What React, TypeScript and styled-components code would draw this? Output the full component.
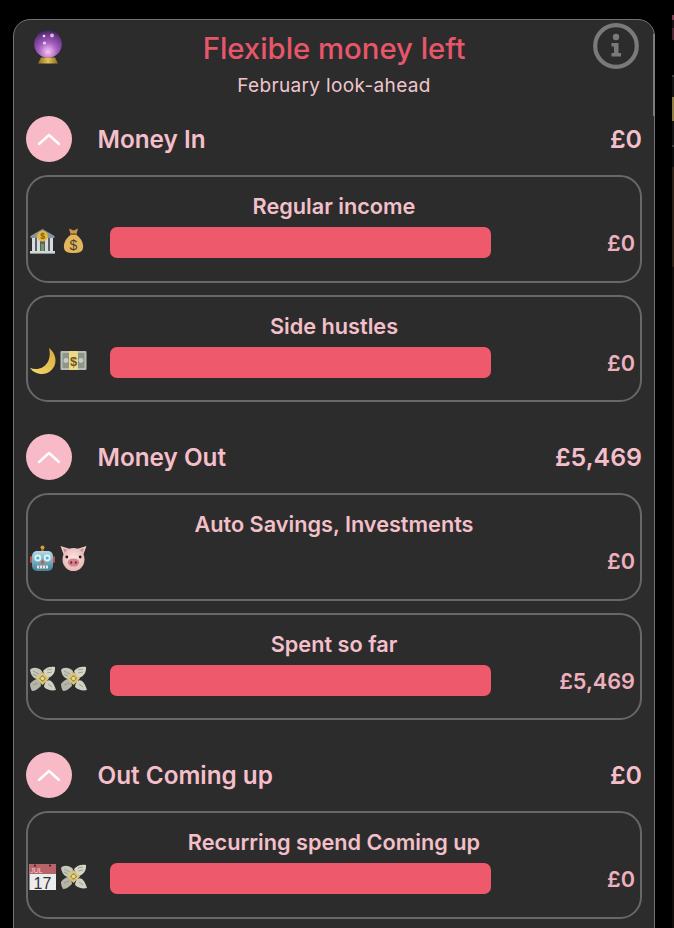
import React from "react";
import styled, { createGlobalStyle } from "styled-components";

const Global = createGlobalStyle`
  html, body { margin: 0; padding: 0; height: 100%; background: #000; overflow: hidden; }
  body { font-family: Inter, "Noto Sans", "Liberation Sans", sans-serif; }
`;

const Page = styled.div`
  display: flex;
  align-items: flex-start;
  height: 928px;
  padding: 19px 0 0 13px;
  box-sizing: border-box;
  overflow: hidden;
`;

const Panel = styled.main`
  position: relative;
  flex: none;
  width: 642px;
  height: 960px;
  box-sizing: border-box;
  padding: 0 12px;
  background: #2c2c2d;
  border: 1px solid #727274;
  border-radius: 17px;
`;

const ScrollThumb = styled.div`
  position: absolute;
  top: 14px;
  right: -1px;
  width: 2px;
  height: 82px;
  background: #7c7c7e;
`;

const Header = styled.header`
  display: grid;
  grid-template-columns: 1fr auto 1fr;
  align-items: start;
  height: 96px;
`;

const HeaderLeft = styled.div`
  padding: 10px 0 0 7px;
`;

const HeaderRight = styled.div`
  display: flex;
  justify-content: flex-end;
  padding: 3px 3px 0 0;
`;

const TitleBlock = styled.div`
  display: flex;
  flex-direction: column;
  align-items: center;
`;

const Title = styled.h1`
  margin: 10px 0 0;
  font-size: 29.3px;
  line-height: 38px;
  font-weight: 550;
  color: #e8566a;
  white-space: nowrap;
`;

const Subtitle = styled.p`
  margin: 6px 0 0;
  font-size: 19px;
  line-height: 24px;
  letter-spacing: 0.35px;
  font-weight: 400;
  color: #f0c6cd;
  white-space: nowrap;
`;

const Section = styled.section`
  margin-bottom: 32px;
`;

const SectionHead = styled.div`
  display: flex;
  align-items: center;
  height: 46px;
  margin-bottom: 13px;
`;

const Toggle = styled.button`
  flex: none;
  display: flex;
  align-items: center;
  justify-content: center;
  width: 46px;
  height: 46px;
  padding: 0;
  border: none;
  border-radius: 50%;
  background: #f8bac6;
`;

const SectionName = styled.h2`
  flex: 1;
  margin: 0 0 0 25.5px;
  font-size: 24.3px;
  font-weight: 600;
  color: #f5bfca;
`;

const SectionTotal = styled.span`
  font-size: 24.9px;
  font-weight: 600;
  color: #f5bfca;
`;

const Card = styled.div`
  box-sizing: border-box;
  height: 107.5px;
  margin-bottom: 12px;
  padding-top: 15px;
  border: 2px solid #68686a;
  border-radius: 22px;
  &:last-child { margin-bottom: 0; }
`;

const CardTitle = styled.h3`
  margin: 0 0 7px;
  font-size: 21.7px;
  line-height: 28px;
  font-weight: 600;
  text-align: center;
  color: #f3c0ca;
`;

const CardRow = styled.div`
  display: flex;
  align-items: center;
  height: 31px;
  padding: 0 5px 0 0.5px;
`;

const Emojis = styled.div`
  flex: none;
  display: flex;
  gap: 4px;
  width: 58px;
  margin: -4px 23px 0 0;
`;

const Bar = styled.div`
  flex: none;
  width: 381px;
  height: 31px;
  border-radius: 7px;
  background: #ee5a6b;
`;

const Amount = styled.span`
  margin-left: auto;
  padding-top: 1px;
  font-size: 21.7px;
  font-weight: 600;
  color: #edb0bc;
`;

const Strip = styled.aside`
  flex: none;
  display: flex;
  flex-direction: column;
  width: 2px;
  margin-left: 17px;
  margin-top: -19px;
`;

const StripPiece = styled.div<{ $h: number; $c: string }>`
  height: ${(p) => p.$h}px;
  background: ${(p) => p.$c};
`;

const Svg: React.FC<React.PropsWithChildren<{ size?: number }>> = ({ size = 27, children }) => (
  <svg width={size} height={size} viewBox="0 0 27 27" style={{ display: "block", flex: "none" }}>
    {children}
  </svg>
);

const Chevron = () => (
  <svg width="24" height="14" viewBox="0 0 24 14">
    <path d="M2 12 L12 3 L22 12" fill="none" stroke="#fff" strokeWidth="2.4" strokeLinecap="round" strokeLinejoin="round" />
  </svg>
);

const Info = () => (
  <svg width="46" height="46" viewBox="0 0 46 46">
    <circle cx="23" cy="23" r="20.8" fill="none" stroke="#7a7a7c" strokeWidth="4.2" />
    <circle cx="23" cy="14" r="3.2" fill="#7a7a7c" />
    <path d="M18.5 20 H25.5 V30 H28 V33.5 H18.5 V30 H21 V23.4 H18.5 Z" fill="#7a7a7c" />
  </svg>
);

const Crystal = () => (
  <svg width="30" height="35" viewBox="0 0 30 35">
    <defs>
      <radialGradient id="orb" cx="50%" cy="78%" r="75%">
        <stop offset="0" stopColor="#f7c6f5" />
        <stop offset="0.45" stopColor="#a45fc0" />
        <stop offset="0.85" stopColor="#6a3686" />
        <stop offset="1" stopColor="#46265c" />
      </radialGradient>
      <linearGradient id="gold" x1="0" x2="1">
        <stop offset="0" stopColor="#8a6a1e" />
        <stop offset="0.5" stopColor="#e3c25a" />
        <stop offset="1" stopColor="#8a6a1e" />
      </linearGradient>
    </defs>
    <circle cx="15" cy="14" r="13.8" fill="url(#orb)" />
    <circle cx="11" cy="6" r="1.3" fill="#f1ddf5" />
    <circle cx="19" cy="5.5" r="1.9" fill="#d9b6e6" />
    <circle cx="11.5" cy="13" r="1.6" fill="#e6cdef" />
    <path d="M8 27.5 H22 L25 33.5 H5 Z" fill="url(#gold)" />
  </svg>
);

const Bank = () => (
  <Svg>
    <path d="M1.5 9 L13.5 2 L25.5 9 V11 H1.5 Z" fill="#8d949a" />
    <rect x="1" y="24" width="25" height="2.6" fill="#d3d6d9" />
    <rect x="3" y="11" width="21" height="13" fill="#59626b" />
    <g fill="#d8dbde">
      <rect x="3" y="11" width="3" height="13" />
      <rect x="8" y="11" width="3" height="13" />
      <rect x="16" y="11" width="3" height="13" />
      <rect x="21" y="11" width="3" height="13" />
    </g>
    <rect x="12" y="17" width="3" height="7" fill="#6d9c63" />
    <circle cx="13.5" cy="9.2" r="5.4" fill="#e5b93b" />
    <text x="13.5" y="12.2" fontSize="8.5" fontWeight="700" textAnchor="middle" fontFamily="Liberation Sans, sans-serif" fill="#7c5a10">$</text>
  </Svg>
);

const Bag = () => (
  <Svg>
    <path d="M9 1.5 L13.5 3.5 L18 1.5 L16.5 7 H10.5 Z" fill="#c49a48" />
    <rect x="10" y="6.2" width="7" height="2" rx="1" fill="#8a6424" />
    <path d="M10.5 8 C5 12 3.5 17 4 21 C4.5 25 8 26 13.5 26 C19 26 22.5 25 23 21 C23.5 17 22 12 16.5 8 Z" fill="#e3b65c" />
    <text x="13.5" y="22.5" fontSize="14" fontWeight="400" textAnchor="middle" fontFamily="Liberation Sans, sans-serif" fill="#4a4132">$</text>
  </Svg>
);

const Moon = () => (
  <Svg>
    <defs>
      <linearGradient id="moon" x1="0" y1="1" x2="1" y2="0">
        <stop offset="0" stopColor="#f6dc6f" />
        <stop offset="1" stopColor="#d9a93a" />
      </linearGradient>
    </defs>
    <path d="M20 1 C24 4 26.5 8.5 26.5 13.5 C26.5 21 20.5 27 13 27 C8 27 3.5 24.5 1 21 C5 22.5 10 22.5 14 20 C20 16.5 22 8.5 20 1 Z" fill="url(#moon)" />
  </Svg>
);

const Note = () => (
  <Svg>
    <rect x="0.5" y="4" width="26" height="19" rx="1" fill="#b9bdb0" />
    <rect x="2.5" y="6" width="22" height="15" fill="#8e958a" />
    <circle cx="6" cy="13.5" r="2.4" fill="#c9ccc2" />
    <circle cx="21" cy="13.5" r="2.4" fill="#c9ccc2" />
    <rect x="9" y="4" width="9" height="19" fill="#ecd98a" />
    <text x="13.5" y="18.5" fontSize="13" fontWeight="700" textAnchor="middle" fontFamily="Liberation Sans, sans-serif" fill="#6e5a1c">$</text>
  </Svg>
);

const Robot = () => (
  <Svg>
    <circle cx="13.5" cy="2.5" r="2" fill="#e19b3c" />
    <rect x="12.5" y="3.5" width="2" height="3" fill="#b77c30" />
    <rect x="1" y="11" width="3" height="7" rx="1.5" fill="#b5544e" />
    <rect x="23" y="11" width="3" height="7" rx="1.5" fill="#b5544e" />
    <defs>
      <linearGradient id="rb" x1="0" y1="0" x2="0" y2="1">
        <stop offset="0" stopColor="#b4dbe6" />
        <stop offset="1" stopColor="#3f8096" />
      </linearGradient>
    </defs>
    <rect x="3" y="6" width="21" height="20" rx="5" fill="url(#rb)" />
    <circle cx="8.8" cy="13" r="3.4" fill="#dff2f7" />
    <circle cx="8.8" cy="13" r="1.6" fill="#4fb4d4" />
    <circle cx="18.2" cy="13" r="3.4" fill="#dff2f7" />
    <circle cx="18.2" cy="13" r="1.6" fill="#4fb4d4" />
    <path d="M13.5 14 L15.5 18.5 H11.5 Z" fill="#c3554f" />
    <rect x="8" y="20.5" width="11" height="3" rx="0.5" fill="#e7e7df" />
    <path d="M10.5 20.5 V23.5 M13.5 20.5 V23.5 M16.5 20.5 V23.5" stroke="#666" strokeWidth="0.7" />
  </Svg>
);

const Pig = () => (
  <Svg>
    <defs>
      <radialGradient id="pg" cx="50%" cy="45%" r="60%">
        <stop offset="0" stopColor="#fbe8e4" />
        <stop offset="1" stopColor="#e6b2b1" />
      </radialGradient>
    </defs>
    <path d="M0.5 1 L10 4 L5 13 Z M26.5 1 L17 4 L22 13 Z" fill="#f0cac3" />
    <path d="M3 3 L7.5 5 L5 9 Z M24 3 L19.5 5 L22 9 Z" fill="#d38e94" />
    <ellipse cx="13.5" cy="14.5" rx="11" ry="11.5" fill="url(#pg)" />
    <ellipse cx="13.5" cy="17.5" rx="5.8" ry="4.1" fill="#d9828f" />
    <ellipse cx="11.2" cy="17.5" rx="1.1" ry="1.6" fill="#7f3543" />
    <ellipse cx="15.8" cy="17.5" rx="1.1" ry="1.6" fill="#7f3543" />
    <circle cx="6.8" cy="12" r="1.4" fill="#2c1a1a" />
    <circle cx="20.2" cy="12" r="1.4" fill="#2c1a1a" />
  </Svg>
);

const Flying = () => (
  <Svg>
    <path d="M1 5 C3 2 9 2 13 6 C13 9 11 12 9 14 C5 14 2 11 1 5 Z" fill="#c6c8ba" />
    <path d="M14 6 C17 2 22 1 26 2 C26.5 7 24 11 19 13 C17 12 15 9 14 6 Z" fill="#d6d6c8" />
    <path d="M1 19 C3 16 6 14 9 14 C11 16 12 19 12 21 C9 24 6 26 3 26 C2 24 1 22 1 19 Z" fill="#b4b6a8" />
    <path d="M17 16 C21 14 24 16 27 25 C23 26 18 25 15 22 C15 20 16 18 17 16 Z" fill="#d0d1c3" />
    <path d="M4 6 L10 9 M4 9 L8 11 M18 5 L23 4 M18 8 L23 7 M4 20 L9 18 M19 19 L23 22" stroke="#8e9283" strokeWidth="0.8" />
    <path d="M13.5 7 L20 13.5 L13.5 20 L7 13.5 Z" fill="#dcc574" />
    <path d="M13.5 10 L17 13.5 L13.5 17 L10 13.5 Z" fill="#9a8a45" />
    <circle cx="13.5" cy="13.5" r="1.8" fill="#e5d797" />
  </Svg>
);

const Calendar = () => (
  <Svg>
    <rect x="0.5" y="1" width="26.5" height="26" fill="#ececec" />
    <rect x="0.5" y="1" width="26.5" height="10" fill="#b8626a" />
    <circle cx="6" cy="2.6" r="1.1" fill="#4a2226" />
    <circle cx="21" cy="2.6" r="1.1" fill="#4a2226" />
    <text x="7.5" y="9.8" fontSize="7" textAnchor="middle" fontFamily="Liberation Sans, sans-serif" fill="#f3d6d8">JUL</text>
    <text x="13.5" y="25.5" fontSize="16" textAnchor="middle" fontFamily="Liberation Sans, sans-serif" fill="#333">17</text>
  </Svg>
);

type Item = { title: string; icons: React.ReactNode[]; amount: string; bar?: boolean };
type Group = { name: string; total: string; items: Item[] };

const groups: Group[] = [
  {
    name: "Money In",
    total: "£0",
    items: [
      { title: "Regular income", icons: [<Bank key="a" />, <Bag key="b" />], amount: "£0", bar: true },
      { title: "Side hustles", icons: [<Moon key="a" />, <Note key="b" />], amount: "£0", bar: true },
    ],
  },
  {
    name: "Money Out",
    total: "£5,469",
    items: [
      { title: "Auto Savings, Investments", icons: [<Robot key="a" />, <Pig key="b" />], amount: "£0" },
      { title: "Spent so far", icons: [<Flying key="a" />, <Flying key="b" />], amount: "£5,469", bar: true },
    ],
  },
  {
    name: "Out Coming up",
    total: "£0",
    items: [
      { title: "Recurring spend Coming up", icons: [<Calendar key="a" />, <Flying key="b" />], amount: "£0", bar: true },
    ],
  },
];

const stripPieces: [number, string][] = [
  [15, "#000"],
  [5, "#7d3a4e"],
  [8, "#1a1014"],
  [12, "#4a2430"],
  [35, "#000"],
  [2, "#3a3a3a"],
  [20, "#141414"],
  [24, "#8f7c40"],
  [24, "#141414"],
  [2, "#3a3a3a"],
  [20, "#0c0c0c"],
  [100, "#2c2016"],
  [661, "#120d0a"],
];

export default function App() {
  return (
    <>
      <Global />
      <Page>
        <Panel>
          <ScrollThumb />
          <Header>
            <HeaderLeft>
              <Crystal />
            </HeaderLeft>
            <TitleBlock>
              <Title>Flexible money left</Title>
              <Subtitle>February look-ahead</Subtitle>
            </TitleBlock>
            <HeaderRight>
              <Info />
            </HeaderRight>
          </Header>
          {groups.map((g) => (
            <Section key={g.name}>
              <SectionHead>
                <Toggle aria-label="Collapse">
                  <Chevron />
                </Toggle>
                <SectionName>{g.name}</SectionName>
                <SectionTotal>{g.total}</SectionTotal>
              </SectionHead>
              {g.items.map((it) => (
                <Card key={it.title}>
                  <CardTitle>{it.title}</CardTitle>
                  <CardRow>
                    <Emojis>{it.icons}</Emojis>
                    {it.bar && <Bar />}
                    <Amount>{it.amount}</Amount>
                  </CardRow>
                </Card>
              ))}
            </Section>
          ))}
        </Panel>
        <Strip>
          {stripPieces.map(([h, c], i) => (
            <StripPiece key={i} $h={h} $c={c} />
          ))}
        </Strip>
      </Page>
    </>
  );
}
